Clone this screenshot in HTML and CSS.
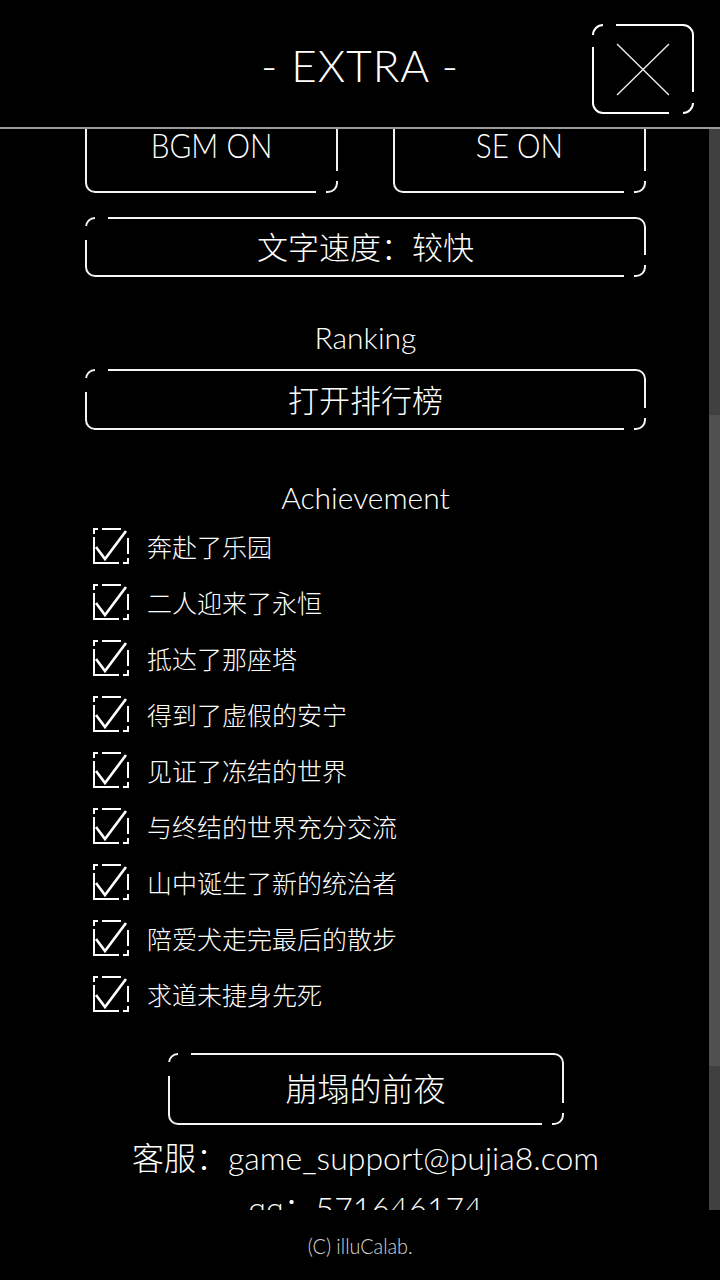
FILE: index.html
```html
<!DOCTYPE html>
<html lang="zh-CN">
<head>
    <meta charset="UTF-8">
    <meta name="viewport" content="width=device-width, initial-scale=1.0">
    <title>EXTRA</title>
    <link rel="stylesheet" href="styles.css">
</head>
<body>
    <svg class="defs" width="0" height="0">
        <symbol id="chk" viewBox="0 0 36 36">
            <path d="M1 6V1H5M9 1H28M1 9V35H26M30 35H35V30M35 26V10" fill="none" stroke="#fff" stroke-width="2"/>
            <path d="M3 19L12 31L33 3" fill="none" stroke="#fff" stroke-width="2.6"/>
        </symbol>
    </svg>
    <div class="screen">
        <header class="topbar">
            <h1 class="title">- EXTRA -</h1>
            <button class="close-btn" aria-label="close">
                <svg width="102" height="90" viewBox="0 0 102 90">
                    <g fill="none" stroke="#fff" stroke-width="2">
                        <path d="M1 11A10 10 0 0 1 11 1"/>
                        <path d="M24 1H91A10 10 0 0 1 101 11V68"/>
                        <path d="M1 23V79A10 10 0 0 0 11 89H77"/>
                        <path d="M101 79A10 10 0 0 1 91 89"/>
                    </g>
                    <path d="M25 20L77 71M77 20L25 71" stroke="#eee" stroke-width="1.4"/>
                </svg>
            </button>
        </header>

        <div class="main">
            <div class="scroll">
                <div class="scroll-inner">
                    <div class="toggle-row">
                        <div class="frame-btn toggle"><span class="narrow">BGM ON</span></div>
                        <div class="frame-btn toggle"><span class="narrow">SE ON</span></div>
                    </div>
                    <div class="frame-btn wide">文字速度：较快</div>

                    <h2 class="section-title">Ranking</h2>
                    <div class="frame-btn wide ranking">打开排行榜</div>

                    <h2 class="section-title achievement">Achievement</h2>
                    <ul class="achievements">
                        <li><svg class="check"><use href="#chk"/></svg>奔赴了乐园</li>
                        <li><svg class="check"><use href="#chk"/></svg>二人迎来了永恒</li>
                        <li><svg class="check"><use href="#chk"/></svg>抵达了那座塔</li>
                        <li><svg class="check"><use href="#chk"/></svg>得到了虚假的安宁</li>
                        <li><svg class="check"><use href="#chk"/></svg>见证了冻结的世界</li>
                        <li><svg class="check"><use href="#chk"/></svg>与终结的世界充分交流</li>
                        <li><svg class="check"><use href="#chk"/></svg>山中诞生了新的统治者</li>
                        <li><svg class="check"><use href="#chk"/></svg>陪爱犬走完最后的散步</li>
                        <li><svg class="check"><use href="#chk"/></svg>求道未捷身先死</li>
                    </ul>

                    <div class="frame-btn chapter">崩塌的前夜</div>

                    <p class="contact">客服：game_support@pujia8.com</p>
                    <p class="contact qq">qq：571646174</p>
                </div>
            </div>
            <div class="scrollbar"><div class="thumb"></div></div>
        </div>

        <footer class="copyright"><span class="narrow">(C) illuCalab.</span></footer>
    </div>
</body>
</html>
```

FILE: styles.css
```css
body {
    margin: 0;
    background-color: #000;
    color: #fff;
    font-family: 'Lato', 'Noto Sans CJK SC', sans-serif;
}
.defs {
    position: absolute;
}
.screen {
    width: 720px;
    height: 1280px;
    display: flex;
    flex-direction: column;
    overflow: hidden;
}
.topbar {
    height: 127px;
    flex-shrink: 0;
    border-bottom: 2px solid #9b9b9b;
    display: grid;
    grid-template-columns: 1fr auto 1fr;
    align-items: center;
}
.title {
    grid-column: 2;
    margin: 3px 0 0;
    font-size: 44px;
    font-weight: 300;
    line-height: 1;
    letter-spacing: 1px;
    white-space: pre;
}
.close-btn {
    grid-column: 3;
    align-self: start;
    justify-self: end;
    margin: 24px 26px 0 0;
    width: 102px;
    height: 90px;
    padding: 0;
    border: none;
    background: none;
}
.close-btn svg {
    display: block;
}
.main {
    height: 1081px;
    display: flex;
    flex-shrink: 0;
}
.scroll {
    flex: 1;
    overflow: hidden;
}
.scroll-inner {
    width: 561px;
    margin: -29px 0 0 85px;
    display: flex;
    flex-direction: column;
    align-items: center;
}
.scrollbar {
    width: 11px;
    background-color: #404040;
}
.thumb {
    height: 651px;
    margin-top: 286px;
    background-color: #505050;
}
.narrow {
    display: inline-block;
    transform: scaleX(0.9);
    white-space: nowrap;
}

/* framed buttons with broken corners */
.frame-btn {
    position: relative;
    box-sizing: border-box;
    display: flex;
    align-items: center;
    justify-content: center;
    border: 2px solid #f4f4f4;
    border-radius: 10px;
    font-size: 31px;
    font-weight: 300;
    line-height: 40px;
}
.frame-btn::after {
    content: '';
    position: absolute;
    top: -2px;
    left: -2px;
    right: -2px;
    bottom: -2px;
    pointer-events: none;
    background:
        linear-gradient(#000, #000) left 10px top 0 / 13px 2px no-repeat,
        linear-gradient(#000, #000) left 0 top 9px / 2px 14px no-repeat,
        linear-gradient(#000, #000) right 0 bottom 12px / 2px 10px no-repeat,
        linear-gradient(#000, #000) right 12px bottom 0 / 10px 2px no-repeat;
}
.toggle-row {
    display: flex;
    gap: 55px;
    width: 100%;
}
.toggle {
    width: 253px;
    height: 93px;
    align-items: flex-end;
    padding-bottom: 32px;
    font-size: 33px;
    line-height: 28px;
}
.wide {
    width: 100%;
    height: 60px;
    margin-top: 24px;
}
.ranking {
    margin-top: 12px;
    height: 61px;
}
.section-title {
    margin: 40px 0 0;
    font-size: 30px;
    font-weight: 300;
    line-height: 40px;
}
.achievement {
    margin-top: 47px;
}
.achievements {
    list-style-type: none;
    align-self: stretch;
    margin: 1px 0 0;
    padding: 0 0 0 8px;
}
.achievements li {
    height: 56px;
    display: flex;
    align-items: center;
    gap: 18px;
    font-size: 25px;
    font-weight: 300;
}
.check {
    width: 36px;
    height: 36px;
    flex-shrink: 0;
}
.chapter {
    width: 396px;
    height: 72px;
    margin-top: 31px;
    font-size: 32px;
}
.contact {
    margin: 13px 0 0;
    font-size: 32px;
    font-weight: 300;
    line-height: 40px;
    white-space: nowrap;
}
.qq {
    margin-top: 10px;
}
.copyright {
    flex: 1;
    display: flex;
    align-items: center;
    justify-content: center;
    font-size: 22px;
    font-weight: 300;
    color: #d6d6d6;
}
```
